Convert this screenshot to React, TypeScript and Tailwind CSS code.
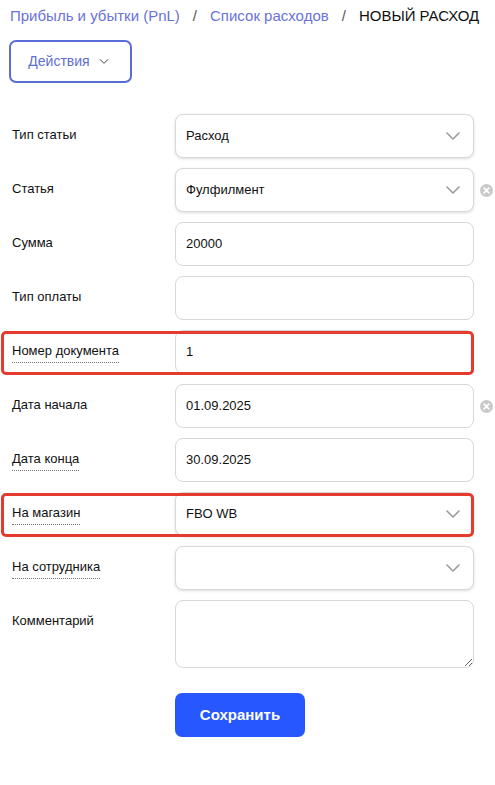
import React from 'react';

const Chevron = ({ className }: { className?: string }) => (
  <svg viewBox="0 0 16 10" className={className} fill="none" stroke="currentColor" strokeWidth="1.6" strokeLinecap="round" strokeLinejoin="round">
    <path d="M2 2l6 6 6-6" />
  </svg>
);

const ClearIcon = () => (
  <svg viewBox="0 0 12 12" className="w-[13px] h-[13px] shrink-0">
    <circle cx="6" cy="6" r="6" fill="#c9c9c9" />
    <path d="M3.8 3.8l4.4 4.4M8.2 3.8l-4.4 4.4" stroke="#fff" strokeWidth="1.6" strokeLinecap="round" />
  </svg>
);

type Row = {
  label: string;
  value?: string;
  kind: 'select' | 'input';
  dotted?: boolean;
  clear?: boolean;
  marked?: boolean;
};

const rows: Row[] = [
  { label: 'Тип статьи', value: 'Расход', kind: 'select' },
  { label: 'Статья', value: 'Фулфилмент', kind: 'select', clear: true },
  { label: 'Сумма', value: '20000', kind: 'input' },
  { label: 'Тип оплаты', value: '', kind: 'input' },
  { label: 'Номер документа', value: '1', kind: 'input', dotted: true, marked: true },
  { label: 'Дата начала', value: '01.09.2025', kind: 'input', clear: true },
  { label: 'Дата конца', value: '30.09.2025', kind: 'input', dotted: true },
  { label: 'На магазин', value: 'FBO WB', kind: 'select', dotted: true, marked: true },
  { label: 'На сотрудника', value: '', kind: 'select', dotted: true },
];

function FieldRow({ row }: { row: Row }) {
  return (
    <div className="relative flex">
      <div className="w-[163px] shrink-0 pt-[13px] text-[13px] leading-4 text-[#111]">
        <span className={row.dotted ? 'inline-block pb-[3px] border-b border-dotted border-[#777]' : ''}>{row.label}</span>
      </div>
      <div className="flex-1 flex items-center">
        <div
          className={
            'relative flex-1 h-[44px] rounded-[8px] border border-[#d8d8d8] bg-white flex items-center pl-[10px] pr-[12px] text-[13px] text-[#111] ' +
            (row.kind === 'select' ? 'shadow-[0_1px_3px_rgba(0,0,0,0.14)]' : '')
          }
        >
          <span className="flex-1">{row.value}</span>
          {row.kind === 'select' && <Chevron className="w-[16px] h-[10px] text-[#9b9b9b]" />}
        </div>
        <div className="w-[21px] flex justify-end pr-[2px]">{row.clear && <ClearIcon />}</div>
      </div>
      {row.marked && (
        <div className="absolute left-[-11px] right-[21px] top-[1px] bottom-[-1px] rounded-[5px] border-[3px] border-[#e53b2f] pointer-events-none" />
      )}
    </div>
  );
}

export default function App() {
  return (
    <div className="min-h-[785px] bg-white font-['Liberation_Sans',Arial,sans-serif]">
      <div className="pt-[6px] pl-[10px] flex items-center text-[15px] leading-5 whitespace-nowrap">
        <span className="text-[#6a72d8]">Прибыль и убытки (PnL)</span>
        <span className="px-[13px] text-[#555]">/</span>
        <span className="text-[#6a72d8]">Список расходов</span>
        <span className="px-[13px] text-[#555]">/</span>
        <span className="text-[#111]">НОВЫЙ РАСХОД</span>
      </div>

      <div className="pl-[9px] pt-[14px]">
        <button className="w-[123px] h-[43px] rounded-[7px] border-[2px] border-[#5a6dd6] flex items-center justify-center gap-[9px] pr-[4px] text-[14px] text-[#5e6ed4]">
          Действия
          <Chevron className="w-[10px] h-[7px] text-[#444]" />
        </button>
      </div>

      <div className="pl-[12px] pt-[31px] flex flex-col gap-[10px]">
        {rows.map((r) => (
          <FieldRow key={r.label} row={r} />
        ))}
        <div className="flex">
          <div className="w-[163px] shrink-0 pt-[13px] text-[13px] leading-4 text-[#111]">Комментарий</div>
          <div className="flex-1 pr-[21px]">
            <textarea className="block w-full h-[68px] rounded-[8px] border border-[#d8d8d8] bg-white outline-none" />
          </div>
        </div>
        <div className="flex pt-[15px]">
          <div className="w-[163px] shrink-0" />
          <button className="w-[130px] h-[44px] rounded-[7px] bg-[#2657ff] text-white font-bold text-[15px]">Сохранить</button>
        </div>
      </div>
    </div>
  );
}
